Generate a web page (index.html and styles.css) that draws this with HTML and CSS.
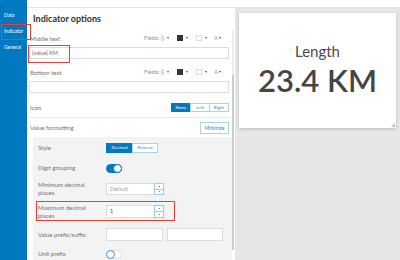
FILE: index.html
```html
<!doctype html>
<html lang="en">
	<head>
		<meta charset="utf-8">
		<title>Indicator options</title>
		<link rel="stylesheet" href="styles.css">
	</head>
	<body>
		<div class="app">
			<nav class="side-nav">
				<div class="nav-item">Data</div>
				<div class="nav-item active">Indicator</div>
				<div class="nav-item">General</div>
			</nav>

			<div class="main">
				<div class="top-strip"></div>
				<div class="work">
					<div class="panel">
						<div class="panel-body">
							<h1 class="panel-title">Indicator options</h1>

							<div class="field-head">
								<span class="label">Middle text</span>
								<div class="text-tools">
									<span class="tool">Fields: {}<i class="caret"></i></span>
									<span class="tool"><b class="swatch dark"></b><i class="caret"></i></span>
									<span class="tool"><b class="swatch"></b><i class="caret"></i></span>
									<span class="tool tool-a">A<i class="caret"></i></span>
								</div>
							</div>
							<div class="text-input"><span class="input-mark">{value} KM</span></div>

							<div class="field-head spaced">
								<span class="label">Bottom text</span>
								<div class="text-tools">
									<span class="tool">Fields: {}<i class="caret"></i></span>
									<span class="tool"><b class="swatch dark"></b><i class="caret"></i></span>
									<span class="tool"><b class="swatch"></b><i class="caret"></i></span>
									<span class="tool tool-a">A<i class="caret"></i></span>
								</div>
							</div>
							<div class="text-input"></div>

							<div class="field-row icon-row">
								<span class="label">Icon</span>
								<div class="seg">
									<span class="on seg-none">None</span>
									<span class="seg-left">Left</span>
									<span class="seg-right">Right</span>
								</div>
							</div>

							<div class="field-row format-row">
								<span class="label">Value formatting</span>
								<span class="btn-min">Minimize</span>
							</div>

							<div class="format-box">
								<div class="opt-row h20">
									<span class="opt-label">Style</span>
									<div class="seg">
										<span class="on seg-dec">Decimal</span>
										<span class="seg-pct">Percent</span>
									</div>
								</div>
								<div class="opt-row h20">
									<span class="opt-label">Digit grouping</span>
									<span class="toggle on"><i></i></span>
								</div>
								<div class="opt-row h22">
									<span class="opt-label">Minimum decimal places</span>
									<div class="num-input placeholder">Default<span class="spin"><i></i><i></i></span></div>
								</div>
								<div class="opt-row h23 marked">
									<span class="opt-label">Maximum decimal places</span>
									<div class="num-input tall">1<span class="spin"><i></i><i></i></span></div>
								</div>
								<div class="opt-row h23">
									<span class="opt-label">Value prefix/suffix</span>
									<div class="pair">
										<div class="small-input"></div>
										<div class="small-input second"></div>
									</div>
								</div>
								<div class="opt-row h16">
									<span class="opt-label">Unit prefix</span>
									<span class="toggle"><i></i></span>
								</div>
							</div>
						</div>
						<div class="scrollbar"><div class="thumb"></div></div>
					</div>

					<div class="preview">
						<div class="card">
							<div class="card-title">Length</div>
							<div class="card-value">23.4 KM</div>
						</div>
					</div>
				</div>
			</div>
		</div>
	</body>
</html>
```

FILE: styles.css
```css
body {
	margin: 0;
	width: 400px;
	height: 260px;
	overflow: hidden;
	background: #fff;
	color: #757575;
	font-family: Lato, "Open Sans", sans-serif;
}
.app {
	display: flex;
	height: 260px;
}

/* left nav */
.side-nav {
	flex: none;
	width: 27px;
	padding-top: 7px;
	box-sizing: border-box;
	background: #0079c1;
	position: relative;
	z-index: 2;
}
.nav-item {
	position: relative;
	height: 16px;
	line-height: 16px;
	padding-left: 4px;
	font-size: 5px;
	color: #fff;
}
.nav-item.active::after {
	content: "";
	position: absolute;
	left: 1px;
	top: 1px;
	width: 28px;
	height: 14px;
	border: 1px solid #ee3b34;
}

.main {
	flex: 1;
	display: flex;
	flex-direction: column;
	min-width: 0;
}
.top-strip {
	flex: none;
	height: 7px;
	border-bottom: 1px solid #e4e4e4;
}
.work {
	flex: 1;
	display: flex;
	min-height: 0;
}

/* settings panel */
.panel {
	flex: none;
	width: 208px;
	display: flex;
}
.panel-body {
	width: 205px;
	padding: 0 3px 0 2px;
	box-sizing: border-box;
}
.panel-title {
	margin: 0;
	height: 22px;
	line-height: 22px;
	padding-left: 4px;
	font-size: 9px;
	font-weight: 700;
	color: #323232;
}
.label {
	padding-left: 1px;
	font-size: 6px;
	color: #727272;
}
.field-head {
	display: flex;
	align-items: center;
	justify-content: space-between;
	height: 16px;
}
.field-head.spaced {
	margin-top: 5px;
}
.text-tools {
	display: flex;
	align-items: center;
	padding-right: 8px;
	font-size: 5.5px;
	color: #8f8f8f;
}
.tool {
	display: flex;
	align-items: center;
	gap: 3px;
	margin-left: 8px;
}
.tool-a {
	gap: 1px;
	margin-left: 7px;
}
.caret {
	width: 0;
	height: 0;
	border-left: 1.5px solid transparent;
	border-right: 1.5px solid transparent;
	border-top: 2px solid #555;
}
.swatch {
	width: 6px;
	height: 6px;
	box-sizing: border-box;
	border: 1px solid #ddd;
	background: #fff;
}
.swatch.dark {
	background: #333;
	border-color: #333;
}
.text-input {
	margin-top: 1px;
	height: 12px;
	box-sizing: border-box;
	border: 1px solid #dcdcdc;
	font-size: 5.5px;
	line-height: 10px;
	color: #6e6e6e;
}
/* red highlight around the middle text value */
.input-mark {
	display: inline-block;
	margin: -3px 0 0 -2px;
	padding: 2px 11px 4px 3px;
	line-height: 10px;
	border: 1px solid #ee3b34;
	color: #6e6e6e;
	position: relative;
	z-index: 1;
}

.field-row {
	display: flex;
	align-items: center;
	justify-content: space-between;
	height: 19px;
}
.icon-row {
	margin-top: 5px;
	border-bottom: 1px solid #e6e6e6;
}

.seg {
	display: flex;
}
.seg span {
	box-sizing: border-box;
	height: 9px;
	border: 1px solid #a9d2ee;
	margin-left: -1px;
	background: #fff;
	font-size: 4.5px;
	line-height: 7px;
	text-align: center;
	color: #2b87c9;
}
.seg span.on {
	background: #0079c1;
	border-color: #0079c1;
	color: #fff;
	margin-left: 0;
}
.seg-none { width: 20px; }
.seg-left { width: 20px; }
.seg-right { width: 20px; }
.seg-dec { width: 27px; }
.seg-pct { width: 26px; }
.opt-row .seg span {
	height: 10px;
	line-height: 8px;
}

.btn-min {
	box-sizing: border-box;
	width: 29px;
	height: 12px;
	border: 1px solid #a9d2ee;
	font-size: 5px;
	line-height: 10px;
	text-align: center;
	color: #2b87c9;
}

/* value formatting box */
.format-box {
	margin: 0 -3px 0 4px;
	padding: 1px 0 0 5px;
	background: #f3f3f3;
	height: 130px;
}
.opt-row {
	position: relative;
	display: flex;
	align-items: center;
}
.h16 { height: 16px; }
.h20 { height: 20px; }
.h22 { height: 22px; }
.h23 { height: 23px; }
.opt-label {
	flex: none;
	width: 62px;
	padding-right: 6px;
	font-size: 6px;
	line-height: 8px;
	color: #727272;
}
.opt-row.marked::after {
	content: "";
	position: absolute;
	left: -2px;
	top: 1px;
	width: 137px;
	height: 18px;
	border: 1px solid #ee3b34;
}

.toggle {
	position: relative;
	box-sizing: border-box;
	width: 16px;
	height: 9px;
	border: 1px solid #ddd;
	border-radius: 5px;
	background: #fff;
}
.toggle i {
	position: absolute;
	left: -1px;
	top: -1px;
	width: 9px;
	height: 9px;
	box-sizing: border-box;
	border: 1px solid #3d94d1;
	border-radius: 50%;
	background: #fff;
}
.toggle.on {
	background: #0079c1;
	border-color: #0079c1;
}
.toggle.on i {
	left: auto;
	right: -1px;
	border: 1.5px solid #0079c1;
}

.num-input {
	position: relative;
	box-sizing: border-box;
	width: 58px;
	height: 12px;
	border: 1px solid #dcdcdc;
	background: #fff;
	padding-left: 3px;
	font-size: 5.5px;
	line-height: 10px;
	color: #444;
}
.num-input.tall {
	height: 13px;
	line-height: 11px;
}
.num-input.placeholder {
	color: #a0a0a0;
}
.spin {
	position: absolute;
	right: -1px;
	top: -1px;
	bottom: -1px;
	width: 10px;
	display: flex;
	flex-direction: column;
}
.spin i {
	flex: 1;
	position: relative;
	border: 1px solid #9ccbec;
	background: #fff;
}
.spin i + i {
	border-top: none;
}
.spin i::after {
	content: "";
	position: absolute;
	left: 50%;
	top: 50%;
	width: 1px;
	height: 1px;
	margin: -0.5px 0 0 -0.5px;
	background: #3b7fb6;
}
.pair {
	display: flex;
	gap: 4px;
}
.small-input {
	box-sizing: border-box;
	width: 57px;
	height: 13px;
	border: 1px solid #dcdcdc;
	background: #fff;
}
.small-input.second {
	width: 56px;
}

.scrollbar {
	flex: none;
	width: 3px;
	padding-top: 22px;
	box-sizing: border-box;
}
.scrollbar .thumb {
	width: 2px;
	height: 220px;
	background: linear-gradient(#ececec 0 45px, #cbcbcb 45px 220px);
}

/* preview */
.preview {
	flex: 1;
	padding: 5px 4px 0 4px;
	background: #e6e6e6;
}
.card {
	position: relative;
	height: 115px;
	padding-top: 29px;
	box-sizing: border-box;
	background: #fff;
	box-shadow: 0 1px 3px rgba(0, 0, 0, 0.2);
	text-align: center;
	color: #444;
}
.card::after {
	content: "";
	position: absolute;
	right: 1px;
	bottom: 1px;
	width: 0;
	height: 0;
	border-left: 4px solid transparent;
	border-bottom: 4px solid #bdbdbd;
}
.card-title {
	font-size: 15px;
	line-height: 18px;
	color: #4a4a4a;
}
.card-value {
	margin-top: 2px;
	font-size: 31px;
	line-height: 37px;
	font-weight: 600;
	color: #444;
}
```
